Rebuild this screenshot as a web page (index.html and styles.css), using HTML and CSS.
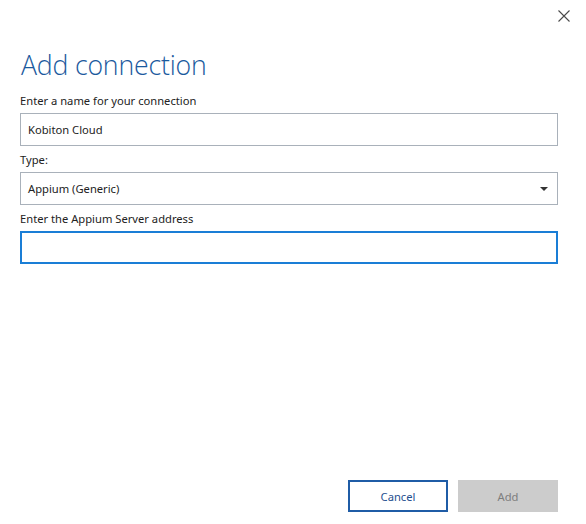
FILE: index.html
```html
<!DOCTYPE html>
<html lang="en">
<head>
<meta charset="utf-8">
<title>Add connection</title>
<link rel="stylesheet" href="styles.css">
</head>
<body>
<div class="dialog">
  <div class="titlebar">
    <button class="close" aria-label="Close">
      <svg width="12" height="12" viewBox="0 0 12 12"><path d="M0.5 0.5 L11.5 11.5 M11.5 0.5 L0.5 11.5" stroke="#4a4a4a" stroke-width="1.1" fill="none"/></svg>
    </button>
  </div>
  <h1 class="title">Add connection</h1>
  <label class="label first">Enter a name for your connection</label>
  <div class="field">Kobiton Cloud</div>
  <label class="label">Type:</label>
  <div class="field select">
    <span>Appium (Generic)</span>
    <svg class="caret" width="8" height="4" viewBox="0 0 8 4"><path d="M0 0 H8 L4 4 Z" fill="#333"/></svg>
  </div>
  <label class="label">Enter the Appium Server address</label>
  <div class="field focused"></div>
  <div class="spacer"></div>
  <div class="footer">
    <button class="btn cancel">Cancel</button>
    <button class="btn add" disabled>Add</button>
  </div>
</div>
</body>
</html>
```
FILE: styles.css
```css
html, body {
  margin: 0;
  padding: 0;
  background: #ffffff;
}
.dialog {
  box-sizing: border-box;
  height: 524px;
  display: flex;
  flex-direction: column;
  padding: 0 28px 12px 20px;
  font-family: "Noto Sans", "Open Sans", sans-serif;
  color: #222;
}
.titlebar {
  display: flex;
  justify-content: flex-end;
  padding-top: 10px;
  margin-right: -12px;
}
.close {
  width: 12px;
  height: 12px;
  padding: 0;
  border: 0;
  background: none;
  display: block;
}
.close svg { display: block; }
.title {
  margin: 25px 0 0 1px;
  font-family: "Open Sans", sans-serif;
  font-weight: 300;
  font-size: 26.7px;
  line-height: 36px;
  color: #1b5a9e;
  letter-spacing: -0.2px;
}
.label {
  display: block;
  font-size: 11.2px;
  line-height: 16px;
  margin: 6px 0 4px 0;
  color: #222;
}
.label.first { margin-top: 10px; }
.field {
  box-sizing: border-box;
  height: 33px;
  border: 1px solid #a9b1ba;
  padding: 0 7px;
  display: flex;
  align-items: center;
  font-size: 11.2px;
  color: #222;
}
.select {
  justify-content: space-between;
  padding-left: 7px;
  padding-right: 9px;
}
.caret { display: block; }
.focused {
  border: 2px solid #1a7ed6;
}
.spacer { flex: 1; }
.footer {
  display: flex;
  justify-content: flex-end;
  gap: 10px;
}
.btn {
  box-sizing: border-box;
  width: 100px;
  height: 32px;
  font-family: "Noto Sans", "Open Sans", sans-serif;
  font-size: 11.2px;
  padding: 0;
}
.cancel {
  background: #ffffff;
  border: 2px solid #1f5ca6;
  color: #1f4f8f;
}
.add {
  background: #cccccc;
  border: 0;
  color: #7d7d7d;
}
```
